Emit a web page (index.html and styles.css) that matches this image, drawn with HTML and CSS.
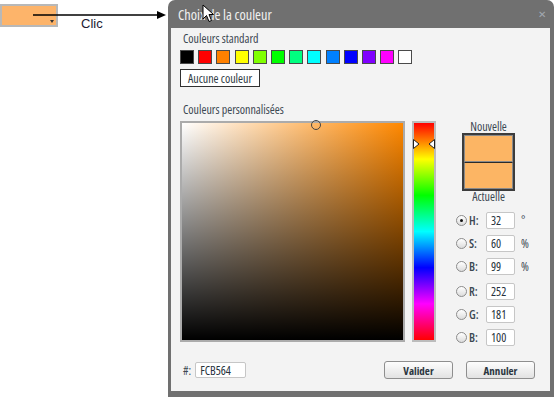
FILE: index.html
```html
<!DOCTYPE html>
<html lang="fr">

<head>
    <meta charset="UTF-8">
    <meta name="viewport" content="width=device-width, initial-scale=1.0">
    <title>Choix de la couleur</title>
    <link rel="stylesheet" href="styles.css">
</head>

<body>
    <div class="page">
        <div class="source">
            <div class="swatch"><span class="drop"></span></div>
            <svg class="arrow" width="134" height="10" viewBox="0 0 134 10">
                <line x1="0" y1="5" x2="126" y2="5" stroke="#000" stroke-width="1.5" />
                <polygon points="124,1 133,5 124,9" fill="#000" />
            </svg>
            <span class="clic">Clic</span>
        </div>

        <div class="dialog">
            <div class="titlebar">
                <span class="title">Choix de la couleur</span>
                <span class="close">&#x2715;</span>
                <svg class="cursor" width="13" height="19" viewBox="0 0 13 19">
                    <path d="M1 1 L1 15 L4.5 11.5 L7 17.5 L9.5 16.5 L7 10.5 L11.5 10.5 Z" fill="#fff" stroke="#000" stroke-width="1" stroke-linejoin="round" />
                </svg>
            </div>

            <div class="body">
                <div class="label">Couleurs standard</div>
                <div class="swatches">
                    <span class="chip c-black"></span>
                    <span class="chip c-red"></span>
                    <span class="chip c-orange"></span>
                    <span class="chip c-yellow"></span>
                    <span class="chip c-lime"></span>
                    <span class="chip c-green"></span>
                    <span class="chip c-spring"></span>
                    <span class="chip c-cyan"></span>
                    <span class="chip c-azure"></span>
                    <span class="chip c-blue"></span>
                    <span class="chip c-violet"></span>
                    <span class="chip c-magenta"></span>
                    <span class="chip c-white"></span>
                </div>
                <button class="none">Aucune couleur</button>

                <div class="label custom">Couleurs personnalisées</div>
                <div class="picker">
                    <div class="field">
                        <span class="ring"></span>
                    </div>
                    <div class="hue">
                        <svg class="mark mark-left" width="7" height="10" viewBox="0 0 7 10">
                            <polygon points="0.5,0.5 6,5 0.5,9.5" fill="#fff" stroke="#222" stroke-width="1" />
                        </svg>
                        <svg class="mark mark-right" width="7" height="10" viewBox="0 0 7 10">
                            <polygon points="6.5,0.5 1,5 6.5,9.5" fill="#fff" stroke="#222" stroke-width="1" />
                        </svg>
                    </div>
                    <div class="side">
                        <div class="cap">Nouvelle</div>
                        <div class="preview">
                            <div class="half"></div>
                            <div class="half"></div>
                        </div>
                        <div class="cap">Actuelle</div>
                        <div class="rows">
                            <div class="row"><span class="radio on"></span><span class="key">H:</span><input class="num" value="32"><span class="unit">°</span></div>
                            <div class="row"><span class="radio"></span><span class="key">S:</span><input class="num" value="60"><span class="unit">%</span></div>
                            <div class="row"><span class="radio"></span><span class="key">B:</span><input class="num" value="99"><span class="unit">%</span></div>
                            <div class="row gap"><span class="radio"></span><span class="key">R:</span><input class="num" value="252"></div>
                            <div class="row"><span class="radio"></span><span class="key">G:</span><input class="num" value="181"></div>
                            <div class="row"><span class="radio"></span><span class="key">B:</span><input class="num" value="100"></div>
                        </div>
                    </div>
                </div>

                <div class="footer">
                    <span class="hash">#:</span>
                    <input class="hex" value="FCB564">
                    <span class="spacer"></span>
                    <button class="btn">Valider</button>
                    <button class="btn">Annuler</button>
                </div>
            </div>
        </div>
    </div>
</body>

</html>
```

FILE: styles.css
```css
html, body {
    margin: 0;
    padding: 0;
    background: #fff;
}

.page {
    display: flex;
    width: 554px;
    height: 397px;
    font-family: "Open Sans", sans-serif;
    font-stretch: 75%;
}

/* left side: the colour box that is clicked */
.source {
    position: relative;
    width: 168px;
    flex: none;
}

.swatch {
    position: relative;
    margin: 4px 0 0 0;
    width: 58px;
    height: 23px;
    box-sizing: border-box;
    border: 2px solid #b8b8b8;
    background: #fdb46a;
}

.drop {
    position: absolute;
    right: 2px;
    bottom: 2px;
    border-left: 2px solid transparent;
    border-right: 2px solid transparent;
    border-top: 3px solid #333;
}

.arrow {
    position: absolute;
    left: 33px;
    top: 10px;
}

.clic {
    position: absolute;
    left: 81px;
    top: 16px;
    font-family: "Liberation Sans", Arial, sans-serif;
    font-stretch: normal;
    font-size: 13px;
    color: #221a33;
}

/* dialog */
.dialog {
    width: 386px;
    height: 397px;
    display: flex;
    flex-direction: column;
    background: #707070;
    border-radius: 7px 7px 0 0;
}

.titlebar {
    position: relative;
    height: 28px;
    flex: none;
    display: flex;
    align-items: center;
    padding: 0 8px 0 10px;
}

.title {
    color: #f0f0f0;
    font-size: 14.3px;
    flex: 1;
}

.close {
    color: #a2a8b0;
    font-size: 10px;
}

.cursor {
    position: absolute;
    left: 34px;
    top: 4px;
}

.body {
    margin: 0 4px 6px 3px;
    flex: 1;
    background: #f3f3f3;
    padding: 4px 0 0 9px;
    color: #3b4752;
    font-size: 12px;
}

.label {
    height: 14px;
    line-height: 14px;
    margin-left: 3px;
}

.label.custom {
    margin-top: 16px;
}

.swatches {
    display: flex;
    gap: 4.2px;
    margin-top: 4px;
}

.chip {
    width: 14px;
    height: 14px;
    box-sizing: border-box;
    border: 1px solid #4a4a4a;
}

.c-black { background: #000; }
.c-red { background: #f00; }
.c-orange { background: #ff8000; }
.c-yellow { background: #ff0; }
.c-lime { background: #80ff00; }
.c-green { background: #0f0; }
.c-spring { background: #00ff80; }
.c-cyan { background: #0ff; }
.c-azure { background: #0080ff; }
.c-blue { background: #00f; }
.c-violet { background: #8000ff; }
.c-magenta { background: #f0f; }
.c-white { background: #fff; }

.none {
    display: block;
    margin-top: 5px;
    width: 80px;
    height: 18px;
    padding: 0;
    border: 1px solid #303030;
    background: #fff;
    font-family: inherit;
    font-stretch: inherit;
    font-size: 12px;
    color: #2f3a44;
}

.picker {
    display: flex;
    align-items: flex-start;
    height: 221px;
    margin-top: 4px;
}

.field {
    position: relative;
    width: 225px;
    height: 221px;
    box-sizing: border-box;
    border: 2px solid #ababab;
    background: linear-gradient(to top, #000, rgba(0, 0, 0, 0)), linear-gradient(to right, #fff, #ff8800);
}

.ring {
    position: absolute;
    left: 129px;
    top: -3px;
    width: 8px;
    height: 8px;
    border: 1.5px solid #444;
    border-radius: 50%;
}

.hue {
    position: relative;
    margin-left: 7px;
    width: 24px;
    height: 221px;
    box-sizing: border-box;
    border: 2px solid #bcbcbc;
    background: linear-gradient(to bottom, #f00, #ff0, #0f0, #0ff, #00f, #f0f, #f00);
}

.mark {
    position: absolute;
    top: 16px;
}

.mark-left {
    left: -1px;
}

.mark-right {
    right: -1px;
}

.side {
    margin-left: 20px;
    width: 75px;
}

.cap {
    width: 65px;
    height: 12px;
    line-height: 12px;
    text-align: center;
}

.preview {
    margin-left: 6px;
    width: 53px;
    height: 58px;
    box-sizing: border-box;
    border: 2px solid #3c3c3c;
    display: flex;
    flex-direction: column;
}

.half {
    flex: 1;
    background: #fcb564;
    border: 1px solid #8a8a8a;
}

.half + .half {
    border-top: 1px solid #2a2a2a;
}

.rows {
    margin-top: 9px;
    display: flex;
    flex-direction: column;
    gap: 6px;
}

.row {
    display: flex;
    align-items: center;
    height: 17px;
}

.row.gap {
    margin-top: 2px;
}

.radio {
    width: 11px;
    height: 11px;
    box-sizing: border-box;
    border: 1px solid #8c8c8c;
    border-radius: 50%;
    background: linear-gradient(#fff, #dcdcdc);
    position: relative;
}

.radio.on::after {
    content: "";
    position: absolute;
    left: 3px;
    top: 3px;
    width: 3px;
    height: 3px;
    border-radius: 50%;
    background: #111;
}

.key {
    margin-left: 2px;
    width: 17px;
    font-weight: 600;
}

.num, .hex {
    box-sizing: border-box;
    height: 17px;
    padding: 0 0 0 4px;
    border: 1px solid #c6c6c6;
    border-radius: 2px;
    background: #fff;
    font-family: inherit;
    font-stretch: inherit;
    font-size: 12px;
    color: #26313b;
}

.num {
    width: 29px;
}

.unit {
    margin-left: 6px;
}

.footer {
    display: flex;
    align-items: center;
    margin-top: 19px;
    padding-right: 15px;
    height: 18px;
}

.hash {
    margin-left: 3px;
}

.hex {
    margin-left: 4px;
    width: 51px;
    height: 16px;
}

.spacer {
    flex: 1;
}

.btn {
    width: 69px;
    height: 18px;
    padding: 0;
    margin-left: 13px;
    border: 1px solid #8e8e8e;
    border-radius: 3px;
    background: linear-gradient(#fdfdfd, #e2e2e2);
    font-family: inherit;
    font-stretch: inherit;
    font-size: 11px;
    font-weight: 700;
    color: #2b3640;
}
```
